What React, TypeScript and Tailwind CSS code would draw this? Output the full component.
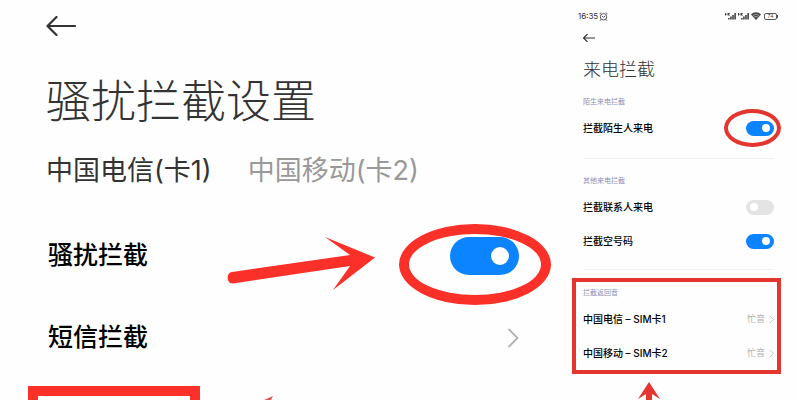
import * as React from 'react';

function BackArrow(props: { className: string; strokeWidth: number }) {
  return (
    <svg className={props.className} viewBox="0 0 30 20" fill="none" stroke="#333" strokeWidth={props.strokeWidth} strokeLinecap="round" strokeLinejoin="round">
      <path d="M10.5 1 1.5 10l9 9M1.5 10H29" />
    </svg>
  );
}

function Chevron(props: { className: string }) {
  return (
    <svg className={props.className} viewBox="0 0 12 20" fill="none" stroke="#b0b0b0" strokeWidth="1.8">
      <path d="M1.5 1 10.5 10l-9 9" />
    </svg>
  );
}

function SmallSwitch(props: { id: string; on: boolean }) {
  return (
    <input
      id={props.id}
      type="checkbox"
      role="switch"
      defaultChecked={props.on}
      className="appearance-none w-7 h-[15px] px-1 rounded-full bg-[#e4e4e4] checked:bg-[#0d84ff] flex items-center justify-start checked:justify-end before:content-[''] before:block before:w-2 before:h-2 before:rounded-full before:bg-white"
    />
  );
}

function SwitchRow(props: { id: string; label: string; on: boolean; circled?: boolean }) {
  return (
    <div className="flex items-center justify-between h-5">
      <label htmlFor={props.id} className="text-[10px] leading-5 font-medium text-black">{props.label}</label>
      <div className="relative">
        <SmallSwitch id={props.id} on={props.on} />
        {props.circled && (
          <div className="absolute -left-[22px] -top-3 w-[57px] h-[38px] rounded-[50%] border-4 border-[#e5352f] pointer-events-none" />
        )}
      </div>
    </div>
  );
}

function ToneRow(props: { label: string }) {
  return (
    <button type="button" className="flex items-center justify-between w-full h-5 text-[10px] leading-5">
      <span className="font-medium text-black">{props.label}</span>
      <span className="flex items-center gap-1 text-[9px] text-[#b0b0b0]">
        忙音
        <Chevron className="w-[5px] h-[9px]" />
      </span>
    </button>
  );
}

function SectionLabel(props: { children: React.ReactNode }) {
  return <h2 className="text-[7px] leading-3 text-[#8e90b8]">{props.children}</h2>;
}

function Signal() {
  return (
    <svg className="w-[11px] h-2" viewBox="0 0 22 16" fill="#444">
      <path d="M0 2h2v1.500h2V2h1v5H4V5H2v2H0zM6 2h4v1.500H8v2h2V7H6zM6 12h3.200v3H6zM10.200 9h3.200v6h-3.200zM14.400 6h3.200v9h-3.200zM18.600 2h3.200v13h-3.200z" />
    </svg>
  );
}

function StatusBar() {
  return (
    <div className="flex items-center justify-between h-3 -ml-[5px] -mr-1">
      <div className="flex items-center gap-px text-[8px] leading-3 text-[#333]">
        16:35
        <svg className="w-[9px] h-[9px]" viewBox="0 0 16 16" fill="none" stroke="#444" strokeWidth="1.6">
          <circle cx="8" cy="8.5" r="5.7" />
          <path d="M1 3.5 4 1M15 3.5 12 1M5 7l3 2.5L11 7M3.5 13 2 15.500M12.500 13l1.500 2.500" />
        </svg>
      </div>
      <div className="flex items-center gap-0.5">
        <Signal />
        <Signal />
        <svg className="w-[10px] h-2" viewBox="0 0 20 16">
          <path d="M0 5C6-1 14-1 20 5L10 16Z" fill="#444" />
          <path d="M3.500 7.500c4-3.500 9-3.500 13 0M6 10.500c2.500-2 5.500-2 8 0" stroke="#fff" strokeWidth="1" fill="none" />
        </svg>
        <div className="flex items-center ml-px">
          <div className="flex items-center justify-center w-[13px] h-[7px] rounded-[2px] border border-[#555] text-[5px] leading-none text-[#444]">74</div>
          <div className="w-px h-[3px] bg-[#555]" />
        </div>
      </div>
    </div>
  );
}

function HarassmentSettings() {
  return (
    <section className="pt-[14px] pl-[46px] pr-[39px]">
      <button type="button" aria-label="返回" className="flex items-center h-6">
        <BackArrow className="w-[30px] h-5" strokeWidth={2.2} />
      </button>
      <h1 className="mt-9 text-[45px] leading-[56px] font-light text-[#333]">骚扰拦截设置</h1>
      <div className="flex mt-6 gap-9 text-[27px] leading-[34px]">
        <button type="button" className="text-[#333]">中国电信(卡1)</button>
        <button type="button" className="text-[#999]">中国移动(卡2)</button>
      </div>
      <div className="relative flex items-center justify-between h-10 mt-12 pl-0.5">
        <label htmlFor="harass" className="text-[25px] font-medium text-black">骚扰拦截</label>
        <div className="relative">
          <input
            id="harass"
            type="checkbox"
            role="switch"
            defaultChecked
            className="appearance-none w-[69px] h-[38px] px-[10px] rounded-full bg-[#ddd] checked:bg-[#0d84ff] flex items-center justify-start checked:justify-end before:content-[''] before:block before:w-[18px] before:h-[18px] before:rounded-full before:bg-white"
          />
          <div className="absolute -left-[51px] -top-[13px] w-[152px] h-[81px] rounded-[50%] border-[10px] border-[#fb3029] pointer-events-none" />
        </div>
        <svg className="absolute right-36 top-0 w-[150px] h-[60px] pointer-events-none" viewBox="0 0 150 60" fill="#fb3029">
          <path d="M7 36 125 19 100 1 150 21.500 108 54 125 30 8 47.500C1 48 1 36.500 7 36Z" />
        </svg>
      </div>
      <button type="button" className="flex items-center justify-between w-full h-10 mt-[42px] pl-0.5 text-[25px] font-medium text-black">
        短信拦截
        <Chevron className="w-3 h-5" />
      </button>
      <div className="flex mt-7 -ml-[18px]">
        <div className="w-[172px] h-[14px] border-[10px] border-b-0 border-[#fb3029]" />
        <svg className="self-end ml-16 w-3 h-1" viewBox="0 0 12 4" fill="#e5554f">
          <path d="M0 4 9 0 7 4Z" />
        </svg>
      </div>
    </section>
  );
}

function CallBlocking() {
  return (
    <section className="pt-[10px] pl-[25px] pr-[23px]">
      <StatusBar />
      <button type="button" aria-label="返回" className="flex items-center h-4 mt-2">
        <BackArrow className="w-3 h-2" strokeWidth={3} />
      </button>
      <h1 className="mt-2.5 text-[18px] leading-7 font-light text-[#333]">来电拦截</h1>
      <div className="flex flex-col mt-3 gap-2.5 pb-5 border-b border-[#f2f2f2]">
        <SectionLabel>陌生来电拦截</SectionLabel>
        <SwitchRow id="stranger" label="拦截陌生人来电" on={true} circled />
      </div>
      <div className="mt-4 pb-[18px] border-b border-[#f2f2f2]">
        <SectionLabel>其他来电拦截</SectionLabel>
        <div className="flex flex-col mt-2.5 gap-3.5">
          <SwitchRow id="contact" label="拦截联系人来电" on={false} />
          <SwitchRow id="empty" label="拦截空号码" on={true} />
        </div>
      </div>
      <div className="mt-2 -ml-[11px] -mr-[7px] pt-[5px] pb-[7px] pl-[7px] pr-[3px] border-4 border-[#e5352f]">
        <SectionLabel>拦截返回音</SectionLabel>
        <div className="flex flex-col mt-2.5 gap-3.5">
          <ToneRow label="中国电信 – SIM卡1" />
          <ToneRow label="中国移动 – SIM卡2" />
        </div>
      </div>
      <svg className="block mt-2 ml-[55px] w-[22px] h-[18px]" viewBox="0 0 22 18" fill="#e5352f">
        <path d="M11 0 22 17 14 12V18H8V12L0 17Z" />
      </svg>
    </section>
  );
}

export default function App() {
  return (
    <main className="grid grid-cols-[7fr_3fr] min-h-screen bg-[#fefefe] font-[Inter,'Noto_Sans_CJK_SC',sans-serif] overflow-hidden">
      <HarassmentSettings />
      <CallBlocking />
    </main>
  );
}
